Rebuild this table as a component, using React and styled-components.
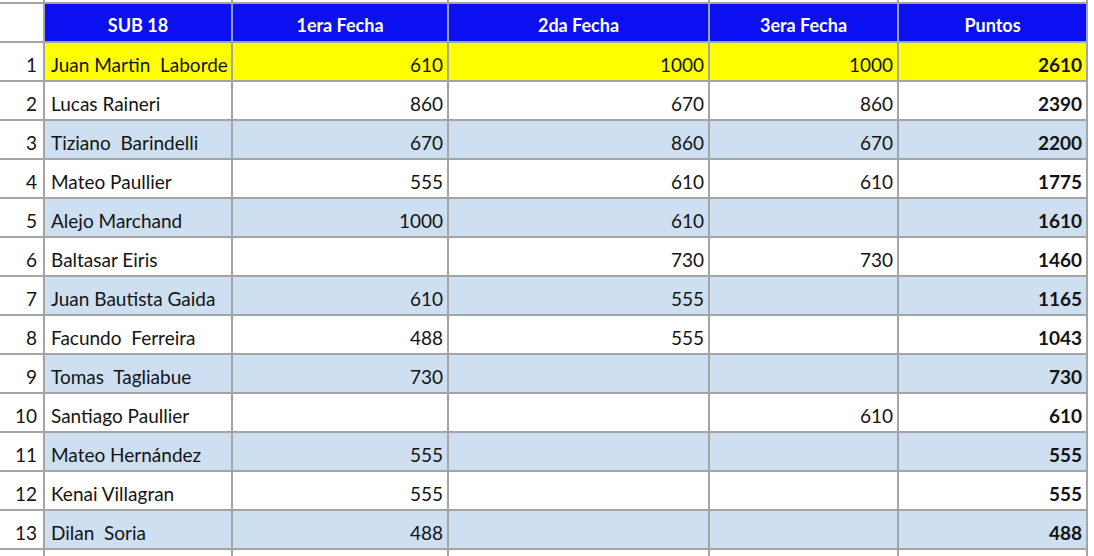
import React from "react";
import styled, { createGlobalStyle } from "styled-components";

const GlobalStyle = createGlobalStyle`
  html, body {
    margin: 0;
    padding: 0;
    background: #ffffff;
  }
  body {
    font-family: Lato, "Open Sans", "Liberation Sans", sans-serif;
    color: #141414;
  }
`;

const Sheet = styled.div`
  display: grid;
  grid-template-columns: 45px 188px 216px 261px 189px 189px;
  grid-template-rows: 4px;
  grid-auto-rows: 39px;
  width: 1088px;
  height: 556px;
  overflow: hidden;
`;

const Cell = styled.div`
  box-sizing: border-box;
  display: flex;
  align-items: center;
  justify-content: ${({ align }) =>
    align === "left" ? "flex-start" : align === "center" ? "center" : "flex-end"};
  padding: ${({ align }) => (align === "left" ? "5px 0 0 6px" : "5px 4px 0 0")};
  border-right: 2px solid #a4a4a4;
  border-bottom: 2px solid #a4a4a4;
  background: ${({ bg }) => bg || "#ffffff"};
  font-size: 19px;
  font-weight: ${({ bold }) => (bold ? 700 : 400)};
  white-space: pre;
  overflow: hidden;
`;

const Spacer = styled(Cell)`
  padding: 0;
  background: #ffffff;
`;

const HeadCell = styled(Cell)`
  justify-content: center;
  padding: 4px 0 0 0;
  background: ${({ blank }) => (blank ? "#ffffff" : "#0a10f2")};
  color: #ffffff;
  font-weight: 700;
  font-size: 18px;
  border-right-color: ${({ blank }) => (blank ? "#a4a4a4" : "#9aa0d8")};
`;

const IndexCell = styled(Cell)`
  padding-right: 6px;
  background: #ffffff;
`;

const Row = styled.div`
  display: contents;
`;

const YELLOW = "#ffff00";
const BLUE = "#cddff1";

const players = [
  ["Juan Martin  Laborde", "610", "1000", "1000", "2610"],
  ["Lucas Raineri", "860", "670", "860", "2390"],
  ["Tiziano  Barindelli", "670", "860", "670", "2200"],
  ["Mateo Paullier", "555", "610", "610", "1775"],
  ["Alejo Marchand", "1000", "610", "", "1610"],
  ["Baltasar Eiris", "", "730", "730", "1460"],
  ["Juan Bautista Gaida", "610", "555", "", "1165"],
  ["Facundo  Ferreira", "488", "555", "", "1043"],
  ["Tomas  Tagliabue", "730", "", "", "730"],
  ["Santiago Paullier", "", "", "610", "610"],
  ["Mateo Hernández", "555", "", "", "555"],
  ["Kenai Villagran", "555", "", "", "555"],
  ["Dilan  Soria", "488", "", "", "488"],
];

const headers = ["SUB 18", "1era Fecha", "2da Fecha", "3era Fecha", "Puntos"];

const rowColor = i => (i === 0 ? YELLOW : i % 2 === 0 ? BLUE : "#ffffff");

export default function App() {
  return (
    <>
      <GlobalStyle />
      <Sheet>
        <Row>
          {Array.from({ length: 6 }).map((_, i) => (
            <Spacer key={i} />
          ))}
        </Row>
        <Row>
          <HeadCell blank />
          {headers.map(h => (
            <HeadCell key={h}>{h}</HeadCell>
          ))}
        </Row>
        {players.map((p, i) => (
          <Row key={p[0]}>
            <IndexCell>{i + 1}</IndexCell>
            <Cell align="left" bg={rowColor(i)}>
              {p[0]}
            </Cell>
            <Cell bg={rowColor(i)}>{p[1]}</Cell>
            <Cell bg={rowColor(i)}>{p[2]}</Cell>
            <Cell bg={rowColor(i)}>{p[3]}</Cell>
            <Cell bg={rowColor(i)} bold>
              {p[4]}
            </Cell>
          </Row>
        ))}
        <Row>
          {Array.from({ length: 6 }).map((_, i) => (
            <Cell key={i} />
          ))}
        </Row>
      </Sheet>
    </>
  );
}
